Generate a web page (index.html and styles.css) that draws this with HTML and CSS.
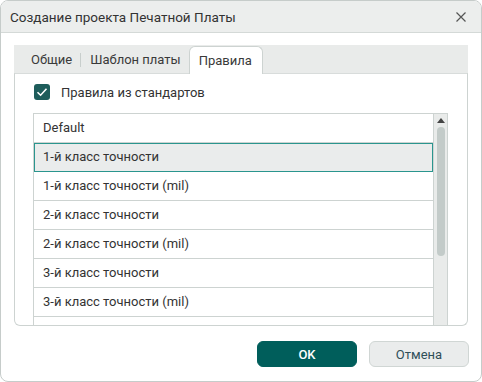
FILE: index.html
```html
<!DOCTYPE html>
<html lang="ru">
<head>
    <meta charset="UTF-8">
    <title>Создание проекта Печатной Платы</title>
    <link rel="stylesheet" href="styles.css">
</head>
<body>
<div class="dialog">
    <div class="titlebar">
        <span class="title">Создание проекта Печатной Платы</span>
        <svg class="close" width="12" height="12" viewBox="0 0 12 12">
            <path d="M1.5 1.5 L10.5 10.5 M10.5 1.5 L1.5 10.5" stroke="#555" stroke-width="1.2" fill="none"/>
        </svg>
    </div>
    <div class="content">
        <div class="tabs">
            <div class="tab">Общие</div>
            <div class="tab-sep"></div>
            <div class="tab">Шаблон платы</div>
            <div class="tab active">Правила</div>
        </div>
        <div class="panel">
            <label class="check-row">
                <span class="checkbox">
                    <svg width="16" height="16" viewBox="0 0 16 16">
                        <path d="M3.5 8.2 L6.6 11.2 L12.5 4.8" stroke="#fff" stroke-width="1.6" fill="none"/>
                    </svg>
                </span>
                Правила из стандартов
            </label>
            <div class="list">
                <div class="rows">
                    <div class="row">Default</div>
                    <div class="row selected">1-й класс точности</div>
                    <div class="row">1-й класс точности (mil)</div>
                    <div class="row">2-й класс точности</div>
                    <div class="row">2-й класс точности (mil)</div>
                    <div class="row">3-й класс точности</div>
                    <div class="row">3-й класс точности (mil)</div>
                    <div class="row">4-й класс точности</div>
                </div>
                <div class="scrollbar">
                    <div class="arrow up"></div>
                    <div class="thumb"></div>
                    <div class="arrow down"></div>
                </div>
            </div>
        </div>
    </div>
    <div class="buttons">
        <button class="btn primary">OK</button>
        <button class="btn">Отмена</button>
    </div>
</div>
</body>
</html>
```

FILE: styles.css
```css
body {
    margin: 0;
    padding: 0;
    background-color: #fff;
    font-family: Roboto, "Liberation Sans", sans-serif;
    font-size: 13px;
    color: #2b2b2b;
}

.dialog {
    width: 482px;
    height: 382px;
    box-sizing: border-box;
    border: 1px solid #c6ccca;
    border-radius: 8px;
    overflow: hidden;
    background-color: #fff;
    display: flex;
    flex-direction: column;
}

.titlebar {
    height: 31px;
    flex-shrink: 0;
    display: flex;
    align-items: center;
    justify-content: space-between;
    padding: 0 14px 0 9px;
    background-color: #eceeed;
    border-bottom: 1px solid #d4d9d7;
}

.title {
    font-size: 13.5px;
    color: #333;
}

.content {
    padding: 12px 13px 0 13px;
}

.tabs {
    height: 28px;
    background-color: #e9ebea;
    display: flex;
    align-items: flex-end;
    padding-left: 17px;
}

.tab {
    height: 27px;
    line-height: 27px;
    color: #3a3a3a;
}

.tab-sep {
    width: 1px;
    height: 14px;
    margin: 0 9px 6px 8px;
    background-color: #c8cecc;
}

.tab.active {
    margin-left: 8px;
    padding: 0 10px 0 9px;
    background-color: #fff;
    border: 1px solid #cdd3d1;
    border-bottom: none;
    border-radius: 6px 6px 0 0;
    position: relative;
    top: 1px;
}

.panel {
    height: 253px;
    box-sizing: border-box;
    border: 1px solid #cdd3d1;
    border-top: 1px solid #d8dcdb;
    border-radius: 0 0 6px 6px;
    padding: 10px 19px 0 18px;
    overflow: hidden;
}

.check-row {
    display: flex;
    align-items: center;
    height: 16px;
    color: #333;
}

.checkbox {
    width: 16px;
    height: 16px;
    border-radius: 3px;
    background-color: #1e5d5b;
    margin: 0 11px 0 1px;
    display: flex;
}

.list {
    margin-top: 13px;
    height: 222px;
    display: flex;
    border: 1px solid #cdd3d1;
    border-bottom: none;
}

.rows {
    flex: 1;
}

.row {
    height: 28px;
    line-height: 28px;
    padding-left: 9px;
    border-bottom: 1px solid #cdd3d1;
    color: #333;
}

.row.selected {
    background-color: #eaecec;
    outline: 1px solid #2a958e;
    outline-offset: -1px;
    border-bottom-color: #2a958e;
}

.scrollbar {
    width: 13px;
    background-color: #e9ebea;
    border-left: 1px solid #cdd3d1;
    display: flex;
    flex-direction: column;
    align-items: center;
}

.arrow {
    width: 0;
    height: 0;
    border-left: 4px solid transparent;
    border-right: 4px solid transparent;
}

.arrow.up {
    margin-top: 4px;
    border-bottom: 5px solid #444;
}

.arrow.down {
    margin-top: auto;
    margin-bottom: 4px;
    border-top: 5px solid #444;
}

.thumb {
    width: 8px;
    height: 129px;
    margin-top: 4px;
    border-radius: 4px;
    background-color: #c3cbc9;
}

.buttons {
    display: flex;
    justify-content: flex-end;
    gap: 12px;
    padding: 15px 12px 0 0;
}

.btn {
    width: 100px;
    height: 26px;
    border-radius: 6px;
    font-family: Roboto, "Liberation Sans", sans-serif;
    font-size: 13px;
    border: 1px solid #d0d6d4;
    background-color: #eaecec;
    color: #2e4f58;
}

.btn.primary {
    background-color: #005e5b;
    border-color: #005e5b;
    color: #fff;
    font-weight: 500;
}
```
